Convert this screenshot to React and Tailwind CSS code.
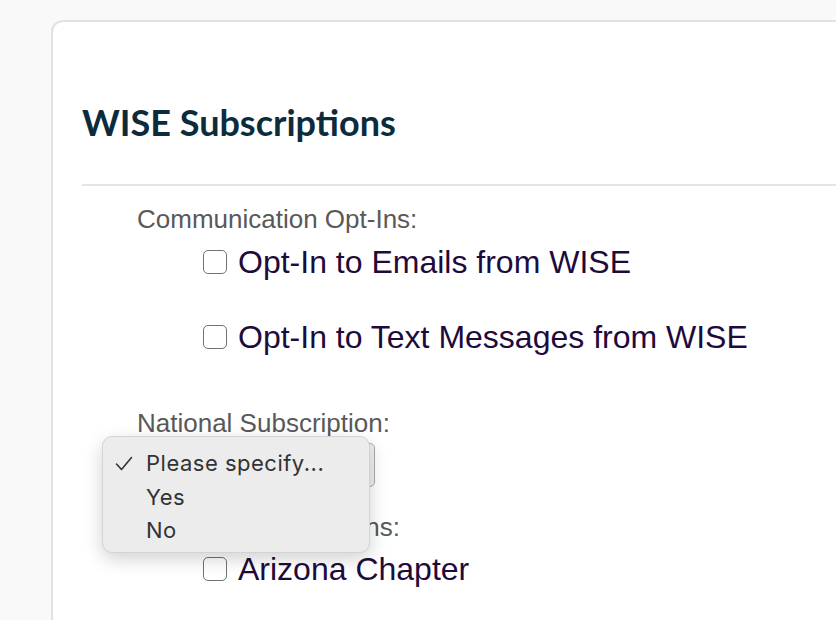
import React from 'react'

function Checkbox({ label, className = '' }) {
    return (
        <label className={`flex items-center ${className}`}>
            <span className="w-6 h-6 shrink-0 rounded-[5px] border-[1.5px] border-[#727272] bg-white"></span>
            <span className="ml-[11px] text-[32px] leading-10 text-[#1f0b3b]">{label}</span>
        </label>
    )
}

function SelectMenu() {
    const options = ['Please specify...', 'Yes', 'No']
    return (
        <div className="absolute left-[-35px] top-[-7px] w-[268px] h-[117px] rounded-[10px] border border-[#d4d4d4] bg-[#ececec] shadow-[0_6px_18px_rgba(0,0,0,0.18)] pt-[10px]">
            {options.map((opt, i) => (
                <div key={opt} className="flex items-center h-[33.5px] font-['Inter',sans-serif] text-[22px] tracking-[0.5px] text-[#333333]">
                    <span className="w-[43px] pl-[12px]">
                        {i === 0 && (
                            <svg width="18" height="15" viewBox="0 0 18 15" fill="none">
                                <path d="M1.5 8 L6.5 13.5 L16.5 1.5" stroke="#333" strokeWidth="1.6" strokeLinecap="round" strokeLinejoin="round" />
                            </svg>
                        )}
                    </span>
                    <span>{opt}</span>
                </div>
            ))}
        </div>
    )
}

export default function App() {
    return (
        <div className="h-[620px] overflow-hidden bg-[#f9f9f9] pt-5 pl-[51px] font-['Liberation_Sans',Arial,sans-serif]">
            <div className="h-[640px] bg-white border-l-2 border-t-2 border-[#e2e2e2] rounded-tl-[12px] pt-[80px] pl-[29px]">
                <h2 className="font-['Lato',sans-serif] font-bold text-[36px] leading-10 text-[#0c2b3d]">WISE Subscriptions</h2>
                <div className="mt-[42px] h-[2px] bg-[#e4e4e4]"></div>

                <div className="pl-[55px]">
                    <div className="mt-[18px] text-[26px] leading-[30px] text-[#595959]">Communication Opt-Ins:</div>
                    <div className="pl-[66px]">
                        <Checkbox className="mt-2" label="Opt-In to Emails from WISE" />
                        <Checkbox className="mt-[35px]" label="Opt-In to Text Messages from WISE" />
                    </div>

                    <div className="mt-[51px] text-[26px] leading-[30px] text-[#595959]">National Subscription:</div>
                    <div className="relative mt-[5px] w-[238px]">
                        <div className="h-11 rounded-[5px] border border-[#ababab] bg-[#efefef]"></div>
                        <SelectMenu />
                    </div>

                    <div className="mt-[25px] text-[26px] leading-[30px] text-[#595959]">Chapter Subscriptions:</div>
                    <div className="pl-[66px]">
                        <Checkbox className="mt-[7px]" label="Arizona Chapter" />
                    </div>
                </div>
            </div>
        </div>
    )
}
